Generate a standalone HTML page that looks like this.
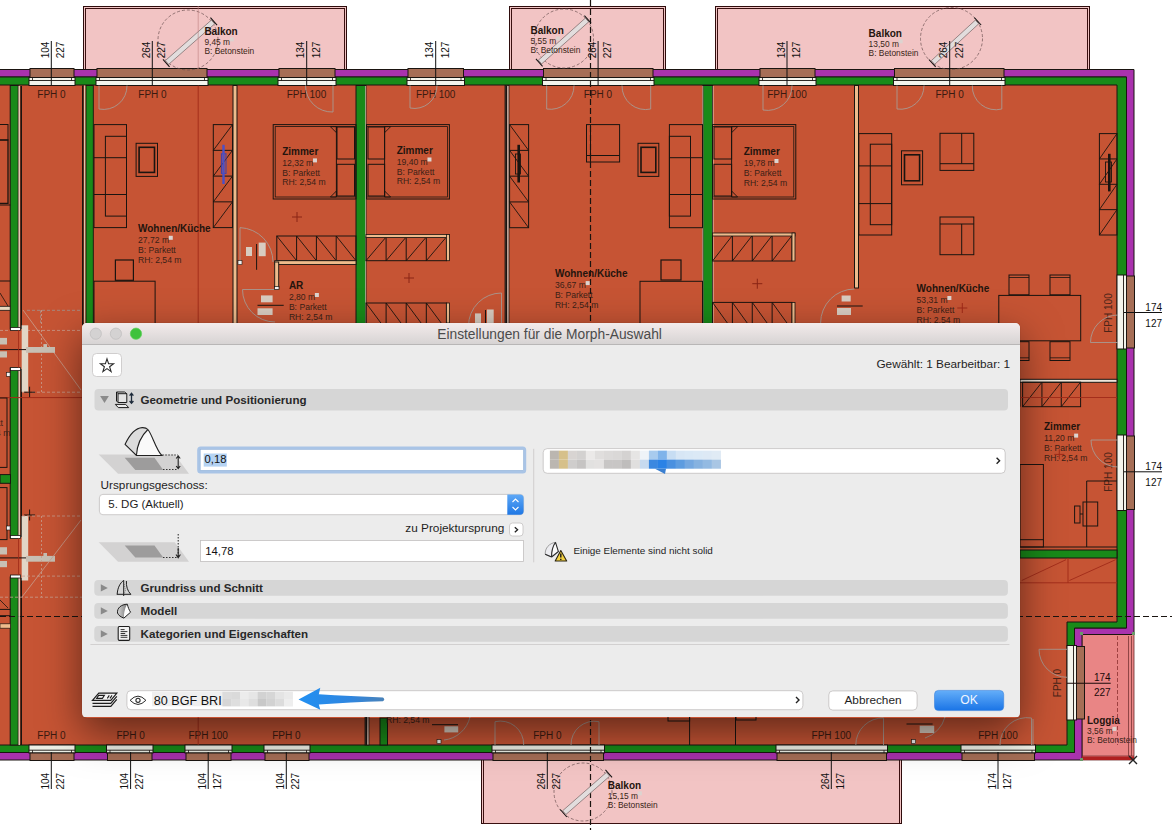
<!DOCTYPE html>
<html><head><meta charset="utf-8"><style>html,body{margin:0;padding:0;width:1172px;height:830px;overflow:hidden;background:#fff;font-family:"Liberation Sans",sans-serif}
#dlg{position:absolute;left:82px;top:323px;width:938px;height:395px;border-radius:5px;box-shadow:0 14px 40px rgba(0,0,0,0.52),0 0 1px rgba(0,0,0,0.35);overflow:hidden}
</style></head>
<body>
<svg width="1172" height="830" viewBox="0 0 1172 830" style="position:absolute;left:0;top:0" font-family="Liberation Sans, sans-serif"><rect x="0" y="0" width="1172" height="830" fill="#ffffff" />
<rect x="83.5" y="6.5" width="263" height="66" fill="#f2c4c4" stroke="#2e0c0c" stroke-width="1" />
<rect x="85.5" y="8.5" width="259" height="64" fill="none" stroke="#3a1010" stroke-width="1" />
<rect x="509.5" y="6.5" width="156" height="66" fill="#f2c4c4" stroke="#2e0c0c" stroke-width="1" />
<rect x="511.5" y="8.5" width="152" height="64" fill="none" stroke="#3a1010" stroke-width="1" />
<rect x="715.5" y="6.5" width="374" height="66" fill="#f2c4c4" stroke="#2e0c0c" stroke-width="1" />
<rect x="717.5" y="8.5" width="370" height="64" fill="none" stroke="#3a1010" stroke-width="1" />
<rect x="481.5" y="756.5" width="420" height="67" fill="#f2c4c4" stroke="#2e0c0c" stroke-width="1" />
<rect x="483.5" y="758.5" width="416" height="65" fill="none" stroke="#3a1010" stroke-width="1" />
<rect x="1082" y="634" width="52" height="126" fill="#e98a8a" />
<rect x="0" y="85" width="1117" height="660" fill="#c65434" />
<rect x="1067" y="623" width="60" height="130" fill="#ffffff" />
<rect x="1082" y="634" width="52" height="126" fill="#e98585" stroke="#6a2a2a" stroke-width="0.8" />
<path d="M-5 69.5 L1134 69.5 L1134 634.5 L1082 634.5 L1082 760 L-5 760 L-5 752.5 L1074.5 752.5 L1074.5 628 L1126.5 628 L1126.5 77 L-5 77 Z" fill="#a932ad" stroke="#1a1410" stroke-width="1" />
<path d="M-5 77 L1126.5 77 L1126.5 628 L1074.5 628 L1074.5 752.5 L-5 752.5 L-5 745 L1067 745 L1067 622 L1117 622 L1117 85 L-5 85 Z" fill="#198a19" stroke="#1a1410" stroke-width="1" />
<rect x="30" y="68.5" width="44" height="9" fill="#a66e56" stroke="#1a1410" stroke-width="1" />
<rect x="29" y="77.5" width="46" height="8" fill="#f4f4ec" stroke="#1a1410" stroke-width="1" />
<line x1="29" y1="80.5" x2="75" y2="80.5" stroke="#1a1410" stroke-width="0.9" />
<line x1="32.5" y1="77.5" x2="32.5" y2="80.5" stroke="#1a1410" stroke-width="0.8" />
<line x1="71.5" y1="77.5" x2="71.5" y2="80.5" stroke="#1a1410" stroke-width="0.8" />
<rect x="97" y="68.5" width="110" height="9" fill="#a66e56" stroke="#1a1410" stroke-width="1" />
<rect x="96" y="77.5" width="112" height="8" fill="#f4f4ec" stroke="#1a1410" stroke-width="1" />
<line x1="96" y1="80.5" x2="208" y2="80.5" stroke="#1a1410" stroke-width="0.9" />
<line x1="99.5" y1="77.5" x2="99.5" y2="80.5" stroke="#1a1410" stroke-width="0.8" />
<line x1="204.5" y1="77.5" x2="204.5" y2="80.5" stroke="#1a1410" stroke-width="0.8" />
<rect x="279" y="68.5" width="56" height="9" fill="#a66e56" stroke="#1a1410" stroke-width="1" />
<rect x="278" y="77.5" width="58" height="8" fill="#f4f4ec" stroke="#1a1410" stroke-width="1" />
<line x1="278" y1="80.5" x2="336" y2="80.5" stroke="#1a1410" stroke-width="0.9" />
<line x1="281.5" y1="77.5" x2="281.5" y2="80.5" stroke="#1a1410" stroke-width="0.8" />
<line x1="332.5" y1="77.5" x2="332.5" y2="80.5" stroke="#1a1410" stroke-width="0.8" />
<rect x="408" y="68.5" width="55.5" height="9" fill="#a66e56" stroke="#1a1410" stroke-width="1" />
<rect x="407" y="77.5" width="57.5" height="8" fill="#f4f4ec" stroke="#1a1410" stroke-width="1" />
<line x1="407" y1="80.5" x2="464.5" y2="80.5" stroke="#1a1410" stroke-width="0.9" />
<line x1="410.5" y1="77.5" x2="410.5" y2="80.5" stroke="#1a1410" stroke-width="0.8" />
<line x1="461.0" y1="77.5" x2="461.0" y2="80.5" stroke="#1a1410" stroke-width="0.8" />
<rect x="543.5" y="68.5" width="109.5" height="9" fill="#a66e56" stroke="#1a1410" stroke-width="1" />
<rect x="542.5" y="77.5" width="111.5" height="8" fill="#f4f4ec" stroke="#1a1410" stroke-width="1" />
<line x1="542.5" y1="80.5" x2="654" y2="80.5" stroke="#1a1410" stroke-width="0.9" />
<line x1="546.0" y1="77.5" x2="546.0" y2="80.5" stroke="#1a1410" stroke-width="0.8" />
<line x1="650.5" y1="77.5" x2="650.5" y2="80.5" stroke="#1a1410" stroke-width="0.8" />
<rect x="760" y="68.5" width="55" height="9" fill="#a66e56" stroke="#1a1410" stroke-width="1" />
<rect x="759" y="77.5" width="57" height="8" fill="#f4f4ec" stroke="#1a1410" stroke-width="1" />
<line x1="759" y1="80.5" x2="816" y2="80.5" stroke="#1a1410" stroke-width="0.9" />
<line x1="762.5" y1="77.5" x2="762.5" y2="80.5" stroke="#1a1410" stroke-width="0.8" />
<line x1="812.5" y1="77.5" x2="812.5" y2="80.5" stroke="#1a1410" stroke-width="0.8" />
<rect x="894.5" y="68.5" width="109.5" height="9" fill="#a66e56" stroke="#1a1410" stroke-width="1" />
<rect x="893.5" y="77.5" width="111.5" height="8" fill="#f4f4ec" stroke="#1a1410" stroke-width="1" />
<line x1="893.5" y1="80.5" x2="1005" y2="80.5" stroke="#1a1410" stroke-width="0.9" />
<line x1="897.0" y1="77.5" x2="897.0" y2="80.5" stroke="#1a1410" stroke-width="0.8" />
<line x1="1001.5" y1="77.5" x2="1001.5" y2="80.5" stroke="#1a1410" stroke-width="0.8" />
<rect x="29" y="745" width="46" height="8" fill="#eef0e6" stroke="#1a1410" stroke-width="1" />
<line x1="29" y1="750.2" x2="75" y2="750.2" stroke="#1a1410" stroke-width="0.9" />
<line x1="32.5" y1="750.2" x2="32.5" y2="753" stroke="#1a1410" stroke-width="0.8" />
<line x1="71.5" y1="750.2" x2="71.5" y2="753" stroke="#1a1410" stroke-width="0.8" />
<rect x="30" y="753" width="44" height="7.5" fill="#a66e56" stroke="#1a1410" stroke-width="1" />
<rect x="106.5" y="745" width="46.5" height="8" fill="#eef0e6" stroke="#1a1410" stroke-width="1" />
<line x1="106.5" y1="750.2" x2="153" y2="750.2" stroke="#1a1410" stroke-width="0.9" />
<line x1="110.0" y1="750.2" x2="110.0" y2="753" stroke="#1a1410" stroke-width="0.8" />
<line x1="149.5" y1="750.2" x2="149.5" y2="753" stroke="#1a1410" stroke-width="0.8" />
<rect x="107.5" y="753" width="44.5" height="7.5" fill="#a66e56" stroke="#1a1410" stroke-width="1" />
<rect x="185" y="745" width="47" height="8" fill="#eef0e6" stroke="#1a1410" stroke-width="1" />
<line x1="185" y1="750.2" x2="232" y2="750.2" stroke="#1a1410" stroke-width="0.9" />
<line x1="188.5" y1="750.2" x2="188.5" y2="753" stroke="#1a1410" stroke-width="0.8" />
<line x1="228.5" y1="750.2" x2="228.5" y2="753" stroke="#1a1410" stroke-width="0.8" />
<rect x="186" y="753" width="45" height="7.5" fill="#a66e56" stroke="#1a1410" stroke-width="1" />
<rect x="264" y="745" width="46" height="8" fill="#eef0e6" stroke="#1a1410" stroke-width="1" />
<line x1="264" y1="750.2" x2="310" y2="750.2" stroke="#1a1410" stroke-width="0.9" />
<line x1="267.5" y1="750.2" x2="267.5" y2="753" stroke="#1a1410" stroke-width="0.8" />
<line x1="306.5" y1="750.2" x2="306.5" y2="753" stroke="#1a1410" stroke-width="0.8" />
<rect x="265" y="753" width="44" height="7.5" fill="#a66e56" stroke="#1a1410" stroke-width="1" />
<rect x="492" y="745" width="112.5" height="8" fill="#eef0e6" stroke="#1a1410" stroke-width="1" />
<line x1="492" y1="750.2" x2="604.5" y2="750.2" stroke="#1a1410" stroke-width="0.9" />
<line x1="495.5" y1="750.2" x2="495.5" y2="753" stroke="#1a1410" stroke-width="0.8" />
<line x1="601.0" y1="750.2" x2="601.0" y2="753" stroke="#1a1410" stroke-width="0.8" />
<rect x="493" y="753" width="110.5" height="7.5" fill="#a66e56" stroke="#1a1410" stroke-width="1" />
<rect x="776" y="745" width="111.5" height="8" fill="#eef0e6" stroke="#1a1410" stroke-width="1" />
<line x1="776" y1="750.2" x2="887.5" y2="750.2" stroke="#1a1410" stroke-width="0.9" />
<line x1="779.5" y1="750.2" x2="779.5" y2="753" stroke="#1a1410" stroke-width="0.8" />
<line x1="884.0" y1="750.2" x2="884.0" y2="753" stroke="#1a1410" stroke-width="0.8" />
<rect x="777" y="753" width="109.5" height="7.5" fill="#a66e56" stroke="#1a1410" stroke-width="1" />
<rect x="961" y="745" width="74.5" height="8" fill="#eef0e6" stroke="#1a1410" stroke-width="1" />
<line x1="961" y1="750.2" x2="1035.5" y2="750.2" stroke="#1a1410" stroke-width="0.9" />
<line x1="964.5" y1="750.2" x2="964.5" y2="753" stroke="#1a1410" stroke-width="0.8" />
<line x1="1032.0" y1="750.2" x2="1032.0" y2="753" stroke="#1a1410" stroke-width="0.8" />
<rect x="962" y="753" width="72.5" height="7.5" fill="#a66e56" stroke="#1a1410" stroke-width="1" />
<rect x="1117" y="275" width="9.5" height="74" fill="#f4f4ec" stroke="#1a1410" stroke-width="1" />
<line x1="1123.5" y1="275" x2="1123.5" y2="349" stroke="#1a1410" stroke-width="0.9" />
<rect x="1126.5" y="276" width="8" height="72" fill="#a66e56" stroke="#1a1410" stroke-width="1" />
<rect x="1117" y="435" width="9.5" height="75.5" fill="#f4f4ec" stroke="#1a1410" stroke-width="1" />
<line x1="1123.5" y1="435" x2="1123.5" y2="510.5" stroke="#1a1410" stroke-width="0.9" />
<rect x="1126.5" y="436" width="8" height="73.5" fill="#a66e56" stroke="#1a1410" stroke-width="1" />
<rect x="1067" y="645.5" width="9.5" height="74.5" fill="#f4f4ec" stroke="#1a1410" stroke-width="1" />
<line x1="1073.5" y1="645.5" x2="1073.5" y2="720" stroke="#1a1410" stroke-width="0.9" />
<rect x="1076.5" y="646.5" width="8" height="72.5" fill="#a66e56" stroke="#1a1410" stroke-width="1" />
<rect x="10.2" y="85.5" width="8" height="243.5" fill="#198a19" stroke="#1a1410" stroke-width="1" />
<rect x="10.2" y="368" width="8" height="170" fill="#198a19" stroke="#1a1410" stroke-width="1" />
<rect x="10.2" y="577" width="8" height="168" fill="#198a19" stroke="#1a1410" stroke-width="1" />
<rect x="86" y="85.5" width="7.3" height="240" fill="#198a19" stroke="#1a1410" stroke-width="0.9" />
<line x1="82.8" y1="85.5" x2="82.8" y2="325" stroke="#1a1410" stroke-width="1.6" />
<line x1="84.7" y1="85.5" x2="84.7" y2="325" stroke="#e6e0c8" stroke-width="1" />
<rect x="356" y="85.5" width="10" height="240" fill="#198a19" stroke="#1a1410" stroke-width="1" />
<rect x="703" y="85.5" width="9.5" height="240" fill="#198a19" stroke="#1a1410" stroke-width="1" />
<rect x="380" y="718" width="7.5" height="27" fill="#198a19" stroke="#1a1410" stroke-width="1" />
<rect x="505" y="85.5" width="4" height="240" fill="#e8c4b4" stroke="#1a1410" stroke-width="0.8" />
<line x1="506.2" y1="85.5" x2="506.2" y2="325" stroke="#1a1410" stroke-width="2" />
<rect x="233" y="85.5" width="4" height="239.5" fill="#eebb8c" stroke="#1a1410" stroke-width="1" />
<rect x="854.5" y="85.5" width="4" height="202.5" fill="#eebb8c" stroke="#1a1410" stroke-width="1" />
<line x1="590.5" y1="0" x2="590.5" y2="830" stroke="#1a1410" stroke-width="1.2" stroke-dasharray="6 3"/>
<line x1="0" y1="616.5" x2="1172" y2="616.5" stroke="#1a1410" stroke-width="1.2" stroke-dasharray="6 3"/>
<circle cx="188" cy="40" r="30" fill="none" stroke="#6a5050" stroke-width="0.7" stroke-dasharray="3 2"/>
<g transform="translate(167,62.5) rotate(-41.36181342213534)"><rect x="0" y="-2.5" width="61.28825336065631" height="5" fill="#e2dddd" stroke="#6a5a5a" stroke-width="0.6"/><line x1="-1" y1="-5" x2="-1" y2="5" stroke="#111" stroke-width="1"/><line x1="62.28825336065631" y1="-5" x2="62.28825336065631" y2="5" stroke="#111" stroke-width="1"/></g>
<circle cx="564" cy="38.5" r="29.5" fill="none" stroke="#6a5050" stroke-width="0.7" stroke-dasharray="3 2"/>
<g transform="translate(540,62) rotate(-41.78451600825179)"><rect x="0" y="-2.5" width="63.0317380372777" height="5" fill="#e2dddd" stroke="#6a5a5a" stroke-width="0.6"/><line x1="-1" y1="-5" x2="-1" y2="5" stroke="#111" stroke-width="1"/><line x1="64.0317380372777" y1="-5" x2="64.0317380372777" y2="5" stroke="#111" stroke-width="1"/></g>
<circle cx="951.5" cy="38.5" r="31" fill="none" stroke="#6a5050" stroke-width="0.7" stroke-dasharray="3 2"/>
<g transform="translate(933,62.5) rotate(-42.62815781021078)"><rect x="0" y="-2.5" width="59.80175582706581" height="5" fill="#e2dddd" stroke="#6a5a5a" stroke-width="0.6"/><line x1="-1" y1="-5" x2="-1" y2="5" stroke="#111" stroke-width="1"/><line x1="60.80175582706581" y1="-5" x2="60.80175582706581" y2="5" stroke="#111" stroke-width="1"/></g>
<circle cx="583" cy="792" r="29" fill="none" stroke="#6a5050" stroke-width="0.7" stroke-dasharray="3 2"/>
<g transform="translate(564.3,812.6) rotate(-41.23230347799668)"><rect x="0" y="-2.5" width="58.10834707681857" height="5" fill="#e2dddd" stroke="#6a5a5a" stroke-width="0.6"/><line x1="-1" y1="-5" x2="-1" y2="5" stroke="#111" stroke-width="1"/><line x1="59.10834707681857" y1="-5" x2="59.10834707681857" y2="5" stroke="#111" stroke-width="1"/></g>
<text x="204.4" y="34.7" font-size="10" font-weight="bold" fill="#24140e" text-anchor="start" >Balkon</text>
<text x="204.4" y="44.7" font-size="8.4" fill="#3a1f16" text-anchor="start" >9,45 m</text>
<rect x="229.77921511627906" y="37.400000000000006" width="4" height="4" fill="#dcd4d0" />
<text x="204.4" y="53.7" font-size="8.4" fill="#3a1f16" text-anchor="start" >B: Betonstein</text>
<text x="530.5" y="33.8" font-size="10" font-weight="bold" fill="#24140e" text-anchor="start" >Balkon</text>
<text x="530.5" y="43.8" font-size="8.4" fill="#3a1f16" text-anchor="start" >5,55 m</text>
<rect x="555.879215116279" y="36.5" width="4" height="4" fill="#dcd4d0" />
<text x="530.5" y="52.8" font-size="8.4" fill="#3a1f16" text-anchor="start" >B: Betonstein</text>
<text x="868.6" y="36.6" font-size="10" font-weight="bold" fill="#24140e" text-anchor="start" >Balkon</text>
<text x="868.6" y="46.6" font-size="8.4" fill="#3a1f16" text-anchor="start" >13,50 m</text>
<rect x="898.6507994186047" y="39.300000000000004" width="4" height="4" fill="#dcd4d0" />
<text x="868.6" y="55.6" font-size="8.4" fill="#3a1f16" text-anchor="start" >B: Betonstein</text>
<text x="607.8" y="788.6" font-size="10" font-weight="bold" fill="#24140e" text-anchor="start" >Balkon</text>
<text x="607.8" y="798.6" font-size="8.4" fill="#3a1f16" text-anchor="start" >15,15 m</text>
<rect x="637.8507994186047" y="791.3000000000001" width="4" height="4" fill="#dcd4d0" />
<text x="607.8" y="807.6" font-size="8.4" fill="#3a1f16" text-anchor="start" >B: Betonstein</text>
<text x="1087" y="724.2" font-size="10" font-weight="bold" fill="#24140e" text-anchor="start" >Loggia</text>
<text x="1087" y="734.2" font-size="8.4" fill="#3a1f16" text-anchor="start" >3,56 m</text>
<rect x="1112.379215116279" y="726.9000000000001" width="4" height="4" fill="#dcd4d0" />
<text x="1087" y="743.2" font-size="8.4" fill="#3a1f16" text-anchor="start" >B: Betonstein</text>
<text x="51.5" y="98" font-size="10" fill="#3a1a10" text-anchor="middle" >FPH 0</text>
<text x="152.5" y="98" font-size="10" fill="#3a1a10" text-anchor="middle" >FPH 0</text>
<text x="306.5" y="98" font-size="10" fill="#3a1a10" text-anchor="middle" >FPH 100</text>
<text x="435.7" y="98" font-size="10" fill="#3a1a10" text-anchor="middle" >FPH 100</text>
<text x="598" y="98" font-size="10" fill="#3a1a10" text-anchor="middle" >FPH 0</text>
<text x="787" y="98" font-size="10" fill="#3a1a10" text-anchor="middle" >FPH 100</text>
<text x="949.7" y="98" font-size="10" fill="#3a1a10" text-anchor="middle" >FPH 0</text>
<text x="51.5" y="738.8" font-size="10" fill="#3a1a10" text-anchor="middle" >FPH 0</text>
<text x="130.6" y="738.8" font-size="10" fill="#3a1a10" text-anchor="middle" >FPH 0</text>
<text x="208.2" y="738.8" font-size="10" fill="#3a1a10" text-anchor="middle" >FPH 100</text>
<text x="286.3" y="738.8" font-size="10" fill="#3a1a10" text-anchor="middle" >FPH 0</text>
<text x="547.3" y="738.8" font-size="10" fill="#3a1a10" text-anchor="middle" >FPH 0</text>
<text x="831.3" y="738.8" font-size="10" fill="#3a1a10" text-anchor="middle" >FPH 100</text>
<text x="998" y="738.8" font-size="10" fill="#3a1a10" text-anchor="middle" >FPH 100</text>
<line x1="51.3" y1="41" x2="51.3" y2="85" stroke="#111111" stroke-width="1" />
<text x="0" y="0" font-size="10" fill="#111" text-anchor="start" transform="translate(49.0,58.3) rotate(-90)">104</text>
<text x="0" y="0" font-size="10" fill="#111" text-anchor="start" transform="translate(64.3,58.3) rotate(-90)">227</text>
<line x1="152.3" y1="41" x2="152.3" y2="85" stroke="#111111" stroke-width="1" />
<text x="0" y="0" font-size="10" fill="#111" text-anchor="start" transform="translate(150.0,58.3) rotate(-90)">264</text>
<text x="0" y="0" font-size="10" fill="#111" text-anchor="start" transform="translate(165.3,58.3) rotate(-90)">227</text>
<line x1="306.7" y1="41" x2="306.7" y2="85" stroke="#111111" stroke-width="1" />
<text x="0" y="0" font-size="10" fill="#111" text-anchor="start" transform="translate(304.4,58.3) rotate(-90)">134</text>
<text x="0" y="0" font-size="10" fill="#111" text-anchor="start" transform="translate(319.7,58.3) rotate(-90)">127</text>
<line x1="435.7" y1="41" x2="435.7" y2="85" stroke="#111111" stroke-width="1" />
<text x="0" y="0" font-size="10" fill="#111" text-anchor="start" transform="translate(433.4,58.3) rotate(-90)">134</text>
<text x="0" y="0" font-size="10" fill="#111" text-anchor="start" transform="translate(448.7,58.3) rotate(-90)">127</text>
<line x1="598.1" y1="41" x2="598.1" y2="85" stroke="#111111" stroke-width="1" />
<text x="0" y="0" font-size="10" fill="#111" text-anchor="start" transform="translate(595.8000000000001,58.3) rotate(-90)">264</text>
<text x="0" y="0" font-size="10" fill="#111" text-anchor="start" transform="translate(611.1,58.3) rotate(-90)">227</text>
<line x1="787" y1="41" x2="787" y2="85" stroke="#111111" stroke-width="1" />
<text x="0" y="0" font-size="10" fill="#111" text-anchor="start" transform="translate(784.7,58.3) rotate(-90)">134</text>
<text x="0" y="0" font-size="10" fill="#111" text-anchor="start" transform="translate(800,58.3) rotate(-90)">127</text>
<line x1="949.7" y1="41" x2="949.7" y2="85" stroke="#111111" stroke-width="1" />
<text x="0" y="0" font-size="10" fill="#111" text-anchor="start" transform="translate(947.4000000000001,58.3) rotate(-90)">264</text>
<text x="0" y="0" font-size="10" fill="#111" text-anchor="start" transform="translate(962.7,58.3) rotate(-90)">227</text>
<line x1="51.3" y1="752" x2="51.3" y2="789" stroke="#111111" stroke-width="1" />
<text x="0" y="0" font-size="10" fill="#111" text-anchor="start" transform="translate(49.099999999999994,789.6) rotate(-90)">104</text>
<text x="0" y="0" font-size="10" fill="#111" text-anchor="start" transform="translate(64.1,789.6) rotate(-90)">227</text>
<line x1="130.6" y1="752" x2="130.6" y2="789" stroke="#111111" stroke-width="1" />
<text x="0" y="0" font-size="10" fill="#111" text-anchor="start" transform="translate(128.4,789.6) rotate(-90)">104</text>
<text x="0" y="0" font-size="10" fill="#111" text-anchor="start" transform="translate(143.4,789.6) rotate(-90)">227</text>
<line x1="208.2" y1="752" x2="208.2" y2="789" stroke="#111111" stroke-width="1" />
<text x="0" y="0" font-size="10" fill="#111" text-anchor="start" transform="translate(206.0,789.6) rotate(-90)">104</text>
<text x="0" y="0" font-size="10" fill="#111" text-anchor="start" transform="translate(221.0,789.6) rotate(-90)">127</text>
<line x1="286.3" y1="752" x2="286.3" y2="789" stroke="#111111" stroke-width="1" />
<text x="0" y="0" font-size="10" fill="#111" text-anchor="start" transform="translate(284.1,789.6) rotate(-90)">104</text>
<text x="0" y="0" font-size="10" fill="#111" text-anchor="start" transform="translate(299.1,789.6) rotate(-90)">227</text>
<line x1="547.3" y1="752" x2="547.3" y2="789" stroke="#111111" stroke-width="1" />
<text x="0" y="0" font-size="10" fill="#111" text-anchor="start" transform="translate(545.0999999999999,789.6) rotate(-90)">264</text>
<text x="0" y="0" font-size="10" fill="#111" text-anchor="start" transform="translate(560.0999999999999,789.6) rotate(-90)">227</text>
<line x1="831.3" y1="752" x2="831.3" y2="789" stroke="#111111" stroke-width="1" />
<text x="0" y="0" font-size="10" fill="#111" text-anchor="start" transform="translate(829.0999999999999,789.6) rotate(-90)">264</text>
<text x="0" y="0" font-size="10" fill="#111" text-anchor="start" transform="translate(844.0999999999999,789.6) rotate(-90)">127</text>
<line x1="998" y1="752" x2="998" y2="789" stroke="#111111" stroke-width="1" />
<text x="0" y="0" font-size="10" fill="#111" text-anchor="start" transform="translate(995.8,789.6) rotate(-90)">174</text>
<text x="0" y="0" font-size="10" fill="#111" text-anchor="start" transform="translate(1010.8,789.6) rotate(-90)">127</text>
<line x1="1124" y1="312.5" x2="1162" y2="312.5" stroke="#111111" stroke-width="1" />
<text x="1153.7" y="311.0" font-size="10" fill="#111" text-anchor="middle" >174</text>
<text x="1153.7" y="326.5" font-size="10" fill="#111" text-anchor="middle" >127</text>
<line x1="1124" y1="471.8" x2="1162" y2="471.8" stroke="#111111" stroke-width="1" />
<text x="1153.7" y="470.3" font-size="10" fill="#111" text-anchor="middle" >174</text>
<text x="1153.7" y="485.8" font-size="10" fill="#111" text-anchor="middle" >127</text>
<line x1="1067" y1="683.3" x2="1110.7" y2="683.3" stroke="#1a0a0a" stroke-width="1.1" />
<text x="1102.3" y="680.8" font-size="10" fill="#1a0a0a" text-anchor="middle" >174</text>
<text x="1102.3" y="695.9" font-size="10" fill="#1a0a0a" text-anchor="middle" >227</text>
<text x="0" y="0" font-size="10" fill="#4a2418" text-anchor="middle" transform="translate(1111.5,313) rotate(-90)">FPH 100</text>
<text x="0" y="0" font-size="10" fill="#4a2418" text-anchor="middle" transform="translate(1111.5,472) rotate(-90)">FPH 100</text>
<text x="0" y="0" font-size="10" fill="#4a2418" text-anchor="middle" transform="translate(1061,683) rotate(-90)">FPH 0</text>
<rect x="-2" y="124.5" width="10" height="15.5" fill="none" stroke="#1a1410" stroke-width="1" />
<rect x="-2" y="140" width="10" height="63.4" fill="none" stroke="#1a1410" stroke-width="1.3" />
<line x1="0" y1="205" x2="10.5" y2="205" stroke="#1a1410" stroke-width="1" />
<line x1="0" y1="281" x2="10.2" y2="281" stroke="#1a1410" stroke-width="1" />
<line x1="0" y1="293" x2="8" y2="306" stroke="#1a1410" stroke-width="0.8" />
<rect x="-1" y="306.3" width="11.2" height="4" fill="#e8d8c0" stroke="#1a1410" stroke-width="0.8" />
<line x1="365.6" y1="86" x2="365.6" y2="323" stroke="#e6d6c6" stroke-width="0.7" />
<line x1="702.8" y1="86" x2="702.8" y2="323" stroke="#e6d6c6" stroke-width="0.7" />
<line x1="713.2" y1="86" x2="713.2" y2="323" stroke="#e6d6c6" stroke-width="0.7" />
<line x1="19.2" y1="86" x2="19.2" y2="329" stroke="#e6e0c8" stroke-width="1.3" />
<line x1="21.2" y1="86" x2="21.2" y2="329" stroke="#1a1410" stroke-width="1.6" />
<line x1="19.2" y1="369" x2="19.2" y2="537" stroke="#e6e0c8" stroke-width="1.3" />
<line x1="21.2" y1="369" x2="21.2" y2="537" stroke="#1a1410" stroke-width="1.6" />
<line x1="19.2" y1="578" x2="19.2" y2="745" stroke="#e6e0c8" stroke-width="1.3" />
<line x1="21.2" y1="578" x2="21.2" y2="745" stroke="#1a1410" stroke-width="1.6" />
<line x1="27" y1="310.3" x2="82" y2="310.3" stroke="#a09590" stroke-width="0.8" stroke-dasharray="3 2"/>
<line x1="40.6" y1="310.3" x2="40.6" y2="323" stroke="#a09590" stroke-width="0.8" stroke-dasharray="3 2"/>
<line x1="198.2" y1="85.5" x2="198.2" y2="323" stroke="#a02a18" stroke-width="0.9" />
<line x1="198.2" y1="6" x2="198.2" y2="69" stroke="#c08080" stroke-width="0.6" />
<rect x="94" y="124.6" width="32.5" height="103.0" fill="none" stroke="#1a1410" stroke-width="1" />
<rect x="105.4" y="136.3" width="21.099999999999994" height="79.79999999999998" fill="none" stroke="#1a1410" stroke-width="1" />
<line x1="94" y1="157.7" x2="126.5" y2="157.7" stroke="#1a1410" stroke-width="1" />
<line x1="94" y1="194.5" x2="126.5" y2="194.5" stroke="#1a1410" stroke-width="1" />
<rect x="136.1" y="143.3" width="21.400000000000006" height="33.099999999999994" fill="none" stroke="#1a1410" stroke-width="1" />
<rect x="139.1" y="147.3" width="15.400000000000006" height="25.099999999999994" fill="none" stroke="#1a1410" stroke-width="1.6" />
<rect x="213.3" y="124.6" width="19.19999999999999" height="103.0" fill="none" stroke="#1a1410" stroke-width="1" />
<line x1="213.3" y1="150.35" x2="232.5" y2="124.6" stroke="#1a1410" stroke-width="0.9" />
<line x1="213.3" y1="150.35" x2="232.5" y2="150.35" stroke="#1a1410" stroke-width="1" />
<line x1="213.3" y1="176.1" x2="232.5" y2="150.35" stroke="#1a1410" stroke-width="0.9" />
<line x1="213.3" y1="176.1" x2="232.5" y2="176.1" stroke="#1a1410" stroke-width="1" />
<line x1="213.3" y1="201.85" x2="232.5" y2="176.1" stroke="#1a1410" stroke-width="0.9" />
<line x1="213.3" y1="201.85" x2="232.5" y2="201.85" stroke="#1a1410" stroke-width="1" />
<line x1="213.3" y1="227.6" x2="232.5" y2="201.85" stroke="#1a1410" stroke-width="0.9" />
<rect x="221.4" y="153.8" width="4.6" height="19.6" fill="none" stroke="#3a40b0" stroke-width="1" />
<line x1="223.5" y1="144.8" x2="223.5" y2="184" stroke="#4a50c8" stroke-width="2.4" />
<rect x="115.4" y="260" width="18" height="20.3" fill="none" stroke="#1a1410" stroke-width="1.2" />
<rect x="94" y="281.2" width="61.1" height="50" fill="none" stroke="#1a1410" stroke-width="1" />
<text x="138" y="232.1" font-size="10" font-weight="bold" fill="#24140e" text-anchor="start" >Wohnen/Küche</text>
<text x="138" y="243.1" font-size="8.6" fill="#3a1f16" text-anchor="start" >27,72 m</text>
<rect x="168.7734375" y="235.79999999999998" width="4" height="4" fill="#dcd4d0" />
<text x="138" y="252.9" font-size="8.6" fill="#3a1f16" text-anchor="start" >B: Parkett</text>
<text x="138" y="262.7" font-size="8.6" fill="#3a1f16" text-anchor="start" >RH: 2,54 m</text>
<path d="M99 85.5 L99 109 A23.5 23.5 0 0 0 127 85.5" fill="none" stroke="#a89a92" stroke-width="0.9" />
<rect x="273.2" y="124.6" width="82.8" height="74.4" fill="none" stroke="#1a1410" stroke-width="1" />
<rect x="275.2" y="126.6" width="80" height="70.4" fill="none" stroke="#1a1410" stroke-width="0.8" />
<line x1="336.4" y1="126.6" x2="336.4" y2="197" stroke="#1a1410" stroke-width="1" />
<rect x="337" y="127" width="17.5" height="32" fill="none" stroke="#1a1410" stroke-width="1" />
<rect x="337" y="164.3" width="17.5" height="31.7" fill="none" stroke="#1a1410" stroke-width="1" />
<path d="M330.4 126.7 L336.4 126.7 L336.4 132.7 Z" fill="none" stroke="#1a1410" stroke-width="0.9" />
<path d="M330.4 197 L336.4 197 L336.4 191 Z" fill="none" stroke="#1a1410" stroke-width="0.9" />
<text x="282.2" y="154.7" font-size="10" font-weight="bold" fill="#24140e" text-anchor="start" >Zimmer</text>
<text x="282.2" y="165.7" font-size="8.6" fill="#3a1f16" text-anchor="start" >12,32 m</text>
<rect x="312.9734375" y="158.39999999999998" width="4" height="4" fill="#dcd4d0" />
<text x="282.2" y="175.5" font-size="8.6" fill="#3a1f16" text-anchor="start" >B: Parkett</text>
<text x="282.2" y="185.29999999999998" font-size="8.6" fill="#3a1f16" text-anchor="start" >RH: 2,54 m</text>
<line x1="292" y1="217" x2="302" y2="217" stroke="#8a2414" stroke-width="1" />
<line x1="297" y1="212" x2="297" y2="222" stroke="#8a2414" stroke-width="1" />
<rect x="276.8" y="236" width="79.19999999999999" height="24.69999999999999" fill="none" stroke="#1a1410" stroke-width="1" />
<line x1="276.8" y1="236" x2="296.6" y2="260.7" stroke="#1a1410" stroke-width="0.9" />
<line x1="296.6" y1="236" x2="296.6" y2="260.7" stroke="#1a1410" stroke-width="1" />
<line x1="296.6" y1="236" x2="316.40000000000003" y2="260.7" stroke="#1a1410" stroke-width="0.9" />
<line x1="316.4" y1="236" x2="316.4" y2="260.7" stroke="#1a1410" stroke-width="1" />
<line x1="316.4" y1="236" x2="336.2" y2="260.7" stroke="#1a1410" stroke-width="0.9" />
<line x1="336.2" y1="236" x2="336.2" y2="260.7" stroke="#1a1410" stroke-width="1" />
<line x1="336.2" y1="236" x2="356.0" y2="260.7" stroke="#1a1410" stroke-width="0.9" />
<rect x="274.7" y="260.7" width="81.3" height="3.8" fill="#eebb8c" stroke="#1a1410" stroke-width="0.9" />
<rect x="274.7" y="262" width="4" height="25.8" fill="#eebb8c" stroke="#1a1410" stroke-width="0.9" />
<path d="M240 262 L240 227.6 A34.400000000000006 34.400000000000006 0 0 1 273 262" fill="none" stroke="#a89a92" stroke-width="0.9" />
<rect x="238" y="260.5" width="4" height="4" fill="#f0f0f0" stroke="#1a1410" stroke-width="0.6" />
<rect x="246" y="247" width="6" height="9" fill="#d8ccc0" />
<rect x="258.7" y="242.6" width="7" height="13.6" fill="#d8ccc0" />
<line x1="256.6" y1="244" x2="256.6" y2="269.8" stroke="#1a1410" stroke-width="1" />
<text x="288.9" y="289.3" font-size="10" font-weight="bold" fill="#24140e" text-anchor="start" >AR</text>
<text x="288.9" y="300.3" font-size="8.6" fill="#3a1f16" text-anchor="start" >2,80 m</text>
<rect x="314.89062499999994" y="293.0" width="4" height="4" fill="#dcd4d0" />
<text x="288.9" y="310.1" font-size="8.6" fill="#3a1f16" text-anchor="start" >B: Parkett</text>
<text x="288.9" y="319.90000000000003" font-size="8.6" fill="#3a1f16" text-anchor="start" >RH: 2,54 m</text>
<rect x="261" y="295.4" width="11.6" height="6.9" fill="#d8ccc0" />
<rect x="257.5" y="308.3" width="15.1" height="6.7" fill="#d8ccc0" />
<line x1="257.5" y1="305.3" x2="283.7" y2="305.3" stroke="#1a1410" stroke-width="1" />
<path d="M275 289.5 L242.5 289.5 A 32.5 32.5 0 0 0 275 322" fill="none" stroke="#a89a92" stroke-width="0.9" />
<rect x="274.6" y="286.5" width="4.4" height="3" fill="#f4f4f4" stroke="#1a1410" stroke-width="0.7" />
<path d="M333 85.5 L333 112 A26.5 26.5 0 0 1 305.5 85.5" fill="none" stroke="#a89a92" stroke-width="0.9" />
<rect x="366.5" y="124.6" width="82.9" height="74.4" fill="none" stroke="#1a1410" stroke-width="1" />
<rect x="366.5" y="126.6" width="80.9" height="70.4" fill="none" stroke="#1a1410" stroke-width="0.8" />
<line x1="384.6" y1="126.6" x2="384.6" y2="197" stroke="#1a1410" stroke-width="1" />
<rect x="368" y="127" width="16.6" height="32" fill="none" stroke="#1a1410" stroke-width="1" />
<rect x="368" y="164.3" width="16.6" height="31.7" fill="none" stroke="#1a1410" stroke-width="1" />
<path d="M390.6 126.7 L384.6 126.7 L384.6 132.7 Z" fill="none" stroke="#1a1410" stroke-width="0.9" />
<path d="M390.6 197 L384.6 197 L384.6 191 Z" fill="none" stroke="#1a1410" stroke-width="0.9" />
<text x="396.7" y="153.8" font-size="10" font-weight="bold" fill="#24140e" text-anchor="start" >Zimmer</text>
<text x="396.7" y="164.8" font-size="8.6" fill="#3a1f16" text-anchor="start" >19,40 m</text>
<rect x="427.4734375" y="157.5" width="4" height="4" fill="#dcd4d0" />
<text x="396.7" y="174.60000000000002" font-size="8.6" fill="#3a1f16" text-anchor="start" >B: Parkett</text>
<text x="396.7" y="184.4" font-size="8.6" fill="#3a1f16" text-anchor="start" >RH: 2,54 m</text>
<rect x="366" y="237" width="80.39999999999998" height="23.69999999999999" fill="none" stroke="#1a1410" stroke-width="1" />
<line x1="366.0" y1="260.7" x2="386.1" y2="237" stroke="#1a1410" stroke-width="0.9" />
<line x1="386.1" y1="237" x2="386.1" y2="260.7" stroke="#1a1410" stroke-width="1" />
<line x1="386.1" y1="260.7" x2="406.20000000000005" y2="237" stroke="#1a1410" stroke-width="0.9" />
<line x1="406.2" y1="237" x2="406.2" y2="260.7" stroke="#1a1410" stroke-width="1" />
<line x1="406.2" y1="260.7" x2="426.29999999999995" y2="237" stroke="#1a1410" stroke-width="0.9" />
<line x1="426.29999999999995" y1="237" x2="426.29999999999995" y2="260.7" stroke="#1a1410" stroke-width="1" />
<line x1="426.29999999999995" y1="260.7" x2="446.4" y2="237" stroke="#1a1410" stroke-width="0.9" />
<rect x="366" y="234.5" width="83.4" height="3" fill="#eebb8c" stroke="#1a1410" stroke-width="0.8" />
<rect x="446.4" y="234.5" width="3" height="26.2" fill="#eebb8c" stroke="#1a1410" stroke-width="0.8" />
<line x1="404" y1="278" x2="414" y2="278" stroke="#8a2414" stroke-width="1" />
<line x1="409" y1="273" x2="409" y2="283" stroke="#8a2414" stroke-width="1" />
<rect x="366" y="303" width="80.39999999999998" height="27" fill="none" stroke="#1a1410" stroke-width="1" />
<line x1="366.0" y1="303" x2="386.1" y2="330" stroke="#1a1410" stroke-width="0.9" />
<line x1="386.1" y1="303" x2="386.1" y2="330" stroke="#1a1410" stroke-width="1" />
<line x1="386.1" y1="303" x2="406.20000000000005" y2="330" stroke="#1a1410" stroke-width="0.9" />
<line x1="406.2" y1="303" x2="406.2" y2="330" stroke="#1a1410" stroke-width="1" />
<line x1="406.2" y1="303" x2="426.29999999999995" y2="330" stroke="#1a1410" stroke-width="0.9" />
<line x1="426.29999999999995" y1="303" x2="426.29999999999995" y2="330" stroke="#1a1410" stroke-width="1" />
<line x1="426.29999999999995" y1="303" x2="446.4" y2="330" stroke="#1a1410" stroke-width="0.9" />
<rect x="446.4" y="303" width="3" height="20" fill="#eebb8c" stroke="#1a1410" stroke-width="0.8" />
<path d="M410 85.5 L410 108 A22.5 22.5 0 0 0 437 85.5" fill="none" stroke="#a89a92" stroke-width="0.9" />
<path d="M501.5 326 L501.5 293 A 33 33 0 0 0 468.5 326" fill="none" stroke="#a89a92" stroke-width="0.9" />
<line x1="485.5" y1="310" x2="485.5" y2="325" stroke="#1a1410" stroke-width="1" />
<rect x="475" y="313.4" width="6" height="10" fill="#d8ccc0" />
<rect x="487" y="309.5" width="6.7" height="13.5" fill="#d8ccc0" />
<rect x="509.6" y="124.6" width="19.0" height="103.1" fill="none" stroke="#1a1410" stroke-width="1" />
<line x1="509.6" y1="124.6" x2="528.6" y2="150.375" stroke="#1a1410" stroke-width="0.9" />
<line x1="509.6" y1="150.375" x2="528.6" y2="150.375" stroke="#1a1410" stroke-width="1" />
<line x1="509.6" y1="150.375" x2="528.6" y2="176.15" stroke="#1a1410" stroke-width="0.9" />
<line x1="509.6" y1="176.14999999999998" x2="528.6" y2="176.14999999999998" stroke="#1a1410" stroke-width="1" />
<line x1="509.6" y1="176.14999999999998" x2="528.6" y2="201.92499999999998" stroke="#1a1410" stroke-width="0.9" />
<line x1="509.6" y1="201.92499999999998" x2="528.6" y2="201.92499999999998" stroke="#1a1410" stroke-width="1" />
<line x1="509.6" y1="201.92499999999998" x2="528.6" y2="227.7" stroke="#1a1410" stroke-width="0.9" />
<line x1="518.7" y1="144.8" x2="518.7" y2="182.5" stroke="#1a1410" stroke-width="2.6" />
<rect x="515.5" y="154" width="5" height="20" fill="none" stroke="#1a1410" stroke-width="0.9" />
<rect x="586.5" y="124.6" width="33.1" height="37.4" fill="none" stroke="#1a1410" stroke-width="1" />
<line x1="590.5" y1="124.6" x2="590.5" y2="162" stroke="#1a1410" stroke-width="1" />
<line x1="586.5" y1="155.5" x2="619.6" y2="155.5" stroke="#1a1410" stroke-width="1" />
<rect x="638" y="143.3" width="20.799999999999955" height="33.099999999999994" fill="none" stroke="#1a1410" stroke-width="1" />
<rect x="641" y="147.3" width="14.799999999999955" height="25.099999999999994" fill="none" stroke="#1a1410" stroke-width="1.6" />
<rect x="669.4" y="124.6" width="33.10000000000002" height="103.1" fill="none" stroke="#1a1410" stroke-width="1" />
<rect x="669.4" y="136.3" width="21.100000000000023" height="79.79999999999998" fill="none" stroke="#1a1410" stroke-width="1" />
<line x1="669.4" y1="157.7" x2="702.5" y2="157.7" stroke="#1a1410" stroke-width="1" />
<line x1="669.4" y1="194.5" x2="702.5" y2="194.5" stroke="#1a1410" stroke-width="1" />
<rect x="661" y="260" width="20" height="20" fill="none" stroke="#1a1410" stroke-width="1.2" />
<rect x="640" y="281.3" width="62.5" height="50" fill="none" stroke="#1a1410" stroke-width="1" />
<text x="554.9" y="277.4" font-size="10" font-weight="bold" fill="#24140e" text-anchor="start" >Wohnen/Küche</text>
<text x="554.9" y="288.4" font-size="8.6" fill="#3a1f16" text-anchor="start" >36,67 m</text>
<rect x="585.6734375" y="281.09999999999997" width="4" height="4" fill="#dcd4d0" />
<text x="554.9" y="298.2" font-size="8.6" fill="#3a1f16" text-anchor="start" >B: Parkett</text>
<text x="554.9" y="308.0" font-size="8.6" fill="#3a1f16" text-anchor="start" >RH: 2,54 m</text>
<path d="M546.7 85.5 L546.7 109 A23.5 23.5 0 0 0 574 85.5" fill="none" stroke="#a89a92" stroke-width="0.9" />
<path d="M650.7 85.5 L650.7 109 A23.5 23.5 0 0 1 622 85.5" fill="none" stroke="#a89a92" stroke-width="0.9" />
<rect x="712.5" y="124.6" width="83.3" height="74.4" fill="none" stroke="#1a1410" stroke-width="1" />
<rect x="712.5" y="126.6" width="81.3" height="70.4" fill="none" stroke="#1a1410" stroke-width="0.8" />
<line x1="731.6" y1="126.6" x2="731.6" y2="197" stroke="#1a1410" stroke-width="1" />
<rect x="714" y="127" width="17.6" height="32" fill="none" stroke="#1a1410" stroke-width="1" />
<rect x="714" y="164.3" width="17.6" height="31.7" fill="none" stroke="#1a1410" stroke-width="1" />
<path d="M737.6 126.7 L731.6 126.7 L731.6 132.7 Z" fill="none" stroke="#1a1410" stroke-width="0.9" />
<path d="M737.6 197 L731.6 197 L731.6 191 Z" fill="none" stroke="#1a1410" stroke-width="0.9" />
<text x="743.7" y="155.3" font-size="10" font-weight="bold" fill="#24140e" text-anchor="start" >Zimmer</text>
<text x="743.7" y="166.3" font-size="8.6" fill="#3a1f16" text-anchor="start" >19,78 m</text>
<rect x="774.4734375" y="159.0" width="4" height="4" fill="#dcd4d0" />
<text x="743.7" y="176.10000000000002" font-size="8.6" fill="#3a1f16" text-anchor="start" >B: Parkett</text>
<text x="743.7" y="185.9" font-size="8.6" fill="#3a1f16" text-anchor="start" >RH: 2,54 m</text>
<rect x="712.5" y="235.5" width="79.5" height="25.5" fill="none" stroke="#1a1410" stroke-width="1" />
<line x1="712.5" y1="261" x2="732.375" y2="235.5" stroke="#1a1410" stroke-width="0.9" />
<line x1="732.375" y1="235.5" x2="732.375" y2="261" stroke="#1a1410" stroke-width="1" />
<line x1="732.375" y1="261" x2="752.25" y2="235.5" stroke="#1a1410" stroke-width="0.9" />
<line x1="752.25" y1="235.5" x2="752.25" y2="261" stroke="#1a1410" stroke-width="1" />
<line x1="752.25" y1="261" x2="772.125" y2="235.5" stroke="#1a1410" stroke-width="0.9" />
<line x1="772.125" y1="235.5" x2="772.125" y2="261" stroke="#1a1410" stroke-width="1" />
<line x1="772.125" y1="261" x2="792.0" y2="235.5" stroke="#1a1410" stroke-width="0.9" />
<rect x="712.5" y="233" width="82.5" height="3" fill="#eebb8c" stroke="#1a1410" stroke-width="0.8" />
<rect x="792" y="233" width="3" height="28" fill="#eebb8c" stroke="#1a1410" stroke-width="0.8" />
<line x1="752.3" y1="283.7" x2="762.3" y2="283.7" stroke="#8a2414" stroke-width="1" />
<line x1="757.3" y1="278.7" x2="757.3" y2="288.7" stroke="#8a2414" stroke-width="1" />
<rect x="712.5" y="302.4" width="79.5" height="27.600000000000023" fill="none" stroke="#1a1410" stroke-width="1" />
<line x1="712.5" y1="302.4" x2="732.375" y2="330" stroke="#1a1410" stroke-width="0.9" />
<line x1="732.375" y1="302.4" x2="732.375" y2="330" stroke="#1a1410" stroke-width="1" />
<line x1="732.375" y1="302.4" x2="752.25" y2="330" stroke="#1a1410" stroke-width="0.9" />
<line x1="752.25" y1="302.4" x2="752.25" y2="330" stroke="#1a1410" stroke-width="1" />
<line x1="752.25" y1="302.4" x2="772.125" y2="330" stroke="#1a1410" stroke-width="0.9" />
<line x1="772.125" y1="302.4" x2="772.125" y2="330" stroke="#1a1410" stroke-width="1" />
<line x1="772.125" y1="302.4" x2="792.0" y2="330" stroke="#1a1410" stroke-width="0.9" />
<rect x="792" y="302.4" width="3" height="21" fill="#eebb8c" stroke="#1a1410" stroke-width="0.8" />
<path d="M763 85.5 L763 110 A24.5 24.5 0 0 0 792 85.5" fill="none" stroke="#a89a92" stroke-width="0.9" />
<path d="M820.6 323 A 34 34 0 0 1 854.5 289" fill="none" stroke="#a89a92" stroke-width="0.9" />
<rect x="841.6" y="295.5" width="9.1" height="6" fill="#d8ccc0" />
<rect x="837" y="308" width="14" height="7" fill="#d8ccc0" />
<line x1="837" y1="306" x2="862.7" y2="306" stroke="#1a1410" stroke-width="1" />
<rect x="858.8" y="133.6" width="32.90000000000009" height="101.4" fill="none" stroke="#1a1410" stroke-width="1" />
<rect x="870.3" y="144.2" width="21.40000000000009" height="80.5" fill="none" stroke="#1a1410" stroke-width="1" />
<line x1="858.8" y1="165.9" x2="891.7" y2="165.9" stroke="#1a1410" stroke-width="1" />
<line x1="858.8" y1="203.6" x2="891.7" y2="203.6" stroke="#1a1410" stroke-width="1" />
<rect x="901.5" y="150.8" width="21.100000000000023" height="34.0" fill="none" stroke="#1a1410" stroke-width="1" />
<rect x="904.5" y="154.8" width="15.100000000000023" height="26.0" fill="none" stroke="#1a1410" stroke-width="1.6" />
<rect x="940" y="133.3" width="33.8" height="37.1" fill="none" stroke="#1a1410" stroke-width="1" />
<line x1="961.7" y1="133.3" x2="961.7" y2="163.7" stroke="#1a1410" stroke-width="1" />
<line x1="940" y1="163.7" x2="973.8" y2="163.7" stroke="#1a1410" stroke-width="1" />
<rect x="940" y="217" width="33.8" height="37.7" fill="none" stroke="#1a1410" stroke-width="1" />
<line x1="961.7" y1="224" x2="961.7" y2="254.7" stroke="#1a1410" stroke-width="1" />
<line x1="940" y1="224" x2="973.8" y2="224" stroke="#1a1410" stroke-width="1" />
<rect x="1099.4" y="133.6" width="17.59999999999991" height="101.4" fill="none" stroke="#1a1410" stroke-width="1" />
<line x1="1099.4" y1="158.95" x2="1117" y2="133.6" stroke="#1a1410" stroke-width="0.9" />
<line x1="1099.4" y1="158.95" x2="1117" y2="158.95" stroke="#1a1410" stroke-width="1" />
<line x1="1099.4" y1="184.29999999999998" x2="1117" y2="158.95" stroke="#1a1410" stroke-width="0.9" />
<line x1="1099.4" y1="184.3" x2="1117" y2="184.3" stroke="#1a1410" stroke-width="1" />
<line x1="1099.4" y1="209.65" x2="1117" y2="184.3" stroke="#1a1410" stroke-width="0.9" />
<line x1="1099.4" y1="209.65" x2="1117" y2="209.65" stroke="#1a1410" stroke-width="1" />
<line x1="1099.4" y1="235.0" x2="1117" y2="209.65" stroke="#1a1410" stroke-width="0.9" />
<line x1="1109.3" y1="153.8" x2="1109.3" y2="191.4" stroke="#1a1410" stroke-width="2.6" />
<rect x="1105.5" y="162" width="6" height="20" fill="none" stroke="#1a1410" stroke-width="0.9" />
<rect x="998.8" y="295.4" width="81.9" height="45.4" fill="none" stroke="#1a1410" stroke-width="1" />
<rect x="1009" y="275" width="20" height="19.8" fill="none" stroke="#1a1410" stroke-width="1" />
<line x1="1009" y1="277.5" x2="1029" y2="277.5" stroke="#1a1410" stroke-width="0.8" />
<rect x="1009" y="341.7" width="20" height="18.8" fill="none" stroke="#1a1410" stroke-width="1" />
<line x1="1009" y1="357.8" x2="1029" y2="357.8" stroke="#1a1410" stroke-width="0.8" />
<rect x="1050" y="275" width="20" height="19.8" fill="none" stroke="#1a1410" stroke-width="1" />
<line x1="1050" y1="277.5" x2="1070" y2="277.5" stroke="#1a1410" stroke-width="0.8" />
<rect x="1050" y="341.7" width="20" height="18.8" fill="none" stroke="#1a1410" stroke-width="1" />
<line x1="1050" y1="357.8" x2="1070" y2="357.8" stroke="#1a1410" stroke-width="0.8" />
<text x="916.6" y="292.3" font-size="10" font-weight="bold" fill="#24140e" text-anchor="start" >Wohnen/Küche</text>
<text x="916.6" y="303.3" font-size="8.6" fill="#3a1f16" text-anchor="start" >53,31 m</text>
<rect x="947.3734375" y="296.0" width="4" height="4" fill="#dcd4d0" />
<text x="916.6" y="313.1" font-size="8.6" fill="#3a1f16" text-anchor="start" >B: Parkett</text>
<text x="916.6" y="322.90000000000003" font-size="8.6" fill="#3a1f16" text-anchor="start" >RH: 2,54 m</text>
<line x1="957.3" y1="308" x2="967.3" y2="308" stroke="#a02a18" stroke-width="1" />
<line x1="962.3" y1="303" x2="962.3" y2="313" stroke="#a02a18" stroke-width="1" />
<path d="M897 85.5 L897 109 A23.5 23.5 0 0 0 924 85.5" fill="none" stroke="#a89a92" stroke-width="0.9" />
<path d="M1001.8 85.5 L1001.8 109 A23.5 23.5 0 0 1 972.3 85.5" fill="none" stroke="#a89a92" stroke-width="0.9" />
<path d="M1118 342.5 L1090.5 342.5 A 27.5 27.5 0 0 1 1118 315" fill="none" stroke="#a89a92" stroke-width="0.9" />
<line x1="22" y1="330.4" x2="82" y2="330.4" stroke="#c8a090" stroke-width="0.8" stroke-dasharray="3 2"/>
<line x1="22" y1="392.2" x2="82" y2="392.2" stroke="#c8a090" stroke-width="0.8" stroke-dasharray="3 2"/>
<line x1="0" y1="330.4" x2="10" y2="330.4" stroke="#c8a090" stroke-width="0.8" stroke-dasharray="3 2"/>
<line x1="41.5" y1="310" x2="41.5" y2="392" stroke="#c8a090" stroke-width="0.8" stroke-dasharray="2 2"/>
<line x1="23" y1="310" x2="81" y2="390" stroke="#c8a090" stroke-width="0.8" />
<rect x="21.7" y="325.3" width="6.5" height="66.5" fill="#e2d6c6" />
<rect x="26" y="347" width="29" height="5.8" fill="#c8c0b4" />
<rect x="43.4" y="344.1" width="3.6" height="3" fill="#c8c0b4" />
<line x1="0" y1="349.6" x2="26" y2="349.6" stroke="#1a1010" stroke-width="1" />
<rect x="0" y="337.9" width="7" height="6.6" fill="#c8c0b4" />
<rect x="0" y="351.3" width="7" height="6.2" fill="#c8c0b4" />
<rect x="10.4" y="327.5" width="10.2" height="3" fill="#ffffff" stroke="#1a1410" stroke-width="0.8" />
<rect x="10.4" y="367.6" width="10.2" height="3" fill="#ffffff" stroke="#1a1410" stroke-width="0.8" />
<line x1="24.1" y1="392.2" x2="35.1" y2="392.2" stroke="#1a1410" stroke-width="1" />
<line x1="29.6" y1="386.7" x2="29.6" y2="397.7" stroke="#1a1410" stroke-width="1" />
<line x1="0" y1="397.6" x2="82" y2="397.6" stroke="#a02a18" stroke-width="1" />
<rect x="6.5" y="372.3" width="3.6" height="4" fill="#f4f4f4" stroke="#1a1410" stroke-width="0.6" />
<line x1="18.5" y1="330" x2="18.5" y2="368" stroke="#a02a18" stroke-width="0.8" />
<rect x="-2" y="398" width="9" height="69.4" fill="none" stroke="#1a1410" stroke-width="1" />
<text x="-2" y="426" font-size="8.6" fill="#3a1f16" text-anchor="start" >tt</text>
<text x="-4" y="436" font-size="8.6" fill="#3a1f16" text-anchor="start" >4 m</text>
<rect x="0" y="474.6" width="10.5" height="8.7" fill="#198a19" stroke="#1a1410" stroke-width="1" />
<rect x="-2" y="487.6" width="9" height="52" fill="none" stroke="#1a1410" stroke-width="1" />
<rect x="10.4" y="535.5" width="10.2" height="3" fill="#ffffff" stroke="#1a1410" stroke-width="0.8" />
<rect x="10.4" y="575" width="10.2" height="3" fill="#ffffff" stroke="#1a1410" stroke-width="0.8" />
<rect x="21.7" y="516" width="6.5" height="64.5" fill="#e2d6c6" />
<line x1="24.1" y1="515" x2="35.1" y2="515" stroke="#1a1410" stroke-width="1" />
<line x1="29.6" y1="509.5" x2="29.6" y2="520.5" stroke="#1a1410" stroke-width="1" />
<rect x="26" y="555.9" width="29" height="5.8" fill="#c8c0b4" />
<rect x="43.4" y="553" width="3.6" height="3" fill="#c8c0b4" />
<line x1="0" y1="557.9" x2="26" y2="557.9" stroke="#1a1010" stroke-width="1" />
<rect x="0" y="547.2" width="7" height="7.3" fill="#c8c0b4" />
<rect x="0" y="561" width="7" height="6.2" fill="#c8c0b4" />
<rect x="6.5" y="526" width="3.6" height="4" fill="#f4f4f4" stroke="#1a1410" stroke-width="0.6" />
<line x1="18.5" y1="538" x2="18.5" y2="575" stroke="#a02a18" stroke-width="0.8" />
<line x1="22" y1="516" x2="82" y2="516" stroke="#c8a090" stroke-width="0.8" stroke-dasharray="3 2"/>
<line x1="22" y1="576.1" x2="82" y2="576.1" stroke="#c8a090" stroke-width="0.8" stroke-dasharray="3 2"/>
<line x1="0" y1="597.2" x2="82" y2="597.2" stroke="#c8a090" stroke-width="0.8" stroke-dasharray="3 2"/>
<line x1="41.5" y1="516" x2="41.5" y2="597" stroke="#c8a090" stroke-width="0.8" stroke-dasharray="2 2"/>
<line x1="22" y1="597" x2="81" y2="520" stroke="#c8a090" stroke-width="0.8" />
<line x1="0" y1="609.4" x2="10.5" y2="609.4" stroke="#1a1410" stroke-width="1" />
<line x1="0" y1="615.7" x2="10.5" y2="615.7" stroke="#1a1410" stroke-width="1" />
<rect x="0" y="623.8" width="10.5" height="4.4" fill="#eebb8c" stroke="#1a1410" stroke-width="0.7" />
<line x1="0" y1="600" x2="8" y2="608" stroke="#1a1410" stroke-width="0.8" />
<rect x="1020" y="379.3" width="97" height="3" fill="#efe6da" stroke="#1a1410" stroke-width="1" />
<rect x="1022.6" y="382.2" width="57.999999999999886" height="24.5" fill="none" stroke="#1a1410" stroke-width="1" />
<line x1="1022.6" y1="406.7" x2="1041.9333333333334" y2="382.2" stroke="#1a1410" stroke-width="0.9" />
<line x1="1041.9333333333334" y1="382.2" x2="1041.9333333333334" y2="406.7" stroke="#1a1410" stroke-width="1" />
<line x1="1041.9333333333334" y1="406.7" x2="1061.2666666666667" y2="382.2" stroke="#1a1410" stroke-width="0.9" />
<line x1="1061.2666666666667" y1="382.2" x2="1061.2666666666667" y2="406.7" stroke="#1a1410" stroke-width="1" />
<line x1="1061.2666666666667" y1="406.7" x2="1080.6" y2="382.2" stroke="#1a1410" stroke-width="0.9" />
<line x1="1020" y1="382.2" x2="1020" y2="406.7" stroke="#1a1410" stroke-width="1" />
<line x1="1020" y1="397.5" x2="1117" y2="397.5" stroke="#a02a18" stroke-width="0.9" />
<text x="1044" y="429.9" font-size="10" font-weight="bold" fill="#24140e" text-anchor="start" >Zimmer</text>
<text x="1044" y="440.9" font-size="8.6" fill="#3a1f16" text-anchor="start" >11,20 m</text>
<rect x="1074.1359375" y="433.59999999999997" width="4" height="4" fill="#dcd4d0" />
<text x="1044" y="450.7" font-size="8.6" fill="#3a1f16" text-anchor="start" >B: Parkett</text>
<text x="1044" y="460.5" font-size="8.6" fill="#3a1f16" text-anchor="start" >RH: 2,54 m</text>
<line x1="1054.3" y1="454.4" x2="1064.3" y2="454.4" stroke="#a02a18" stroke-width="1" />
<line x1="1059.3" y1="449.4" x2="1059.3" y2="459.4" stroke="#a02a18" stroke-width="1" />
<rect x="1020" y="464.5" width="23.4" height="82.5" fill="none" stroke="#1a1410" stroke-width="1" />
<line x1="1020" y1="539.7" x2="1043.4" y2="539.7" stroke="#1a1410" stroke-width="1" />
<line x1="1086.7" y1="481" x2="1117" y2="481" stroke="#1a1410" stroke-width="1" />
<line x1="1086.7" y1="481" x2="1086.7" y2="547" stroke="#1a1410" stroke-width="1" />
<rect x="1083" y="502" width="14.7" height="24" fill="none" stroke="#1a1410" stroke-width="1" />
<rect x="1074.6" y="506" width="5.4" height="17" fill="none" stroke="#1a1410" stroke-width="1" />
<line x1="1080" y1="514" x2="1083" y2="514" stroke="#1a1410" stroke-width="1" />
<line x1="1020" y1="547" x2="1117" y2="547" stroke="#1a1410" stroke-width="1" />
<path d="M1118 440 L1091 440 A 27 27 0 0 0 1118 467" fill="none" stroke="#a89a92" stroke-width="0.9" />
<path d="M1080 350 L1092 346" fill="none" stroke="none" stroke-width="0" />
<rect x="1020" y="550" width="97" height="8" fill="#198a19" stroke="#1a1410" stroke-width="1" />
<line x1="1020" y1="582.8" x2="1117" y2="582.8" stroke="#a02a18" stroke-width="0.9" />
<line x1="1068" y1="558" x2="1068" y2="582.8" stroke="#a02a18" stroke-width="0.9" />
<line x1="1021.7" y1="580.5" x2="1066" y2="559.7" stroke="#a02a18" stroke-width="0.9" />
<line x1="1069.4" y1="580.5" x2="1115.6" y2="559.7" stroke="#a02a18" stroke-width="0.9" />
<path d="M1067 649.3 L1039 649.3 A 28 28 0 0 0 1067 677.3" fill="none" stroke="#a89a92" stroke-width="0.9" />
<path d="M1033 719 L1033 745" fill="none" stroke="#a89a92" stroke-width="0.9" />
<line x1="1117.5" y1="636" x2="1117.5" y2="745" stroke="#8a3030" stroke-width="0.8" stroke-dasharray="4 2"/>
<line x1="1128.5" y1="636" x2="1128.5" y2="756" stroke="#6a2a2a" stroke-width="0.7" />
<line x1="1131.5" y1="636" x2="1131.5" y2="756" stroke="#6a2a2a" stroke-width="0.7" />
<line x1="1082" y1="756" x2="1134" y2="756" stroke="#6a2a2a" stroke-width="0.7" />
<rect x="1082" y="756.5" width="52" height="3.5" fill="#b02020" />
<path d="M1129 756 L1137 764 M1137 756 L1129 764" fill="none" stroke="#222" stroke-width="1.4" />
<rect x="1080" y="632" width="3" height="3" fill="#6a9a6a" />
<rect x="1132" y="632" width="3" height="3" fill="#6a9a6a" />
<rect x="1080" y="758" width="3" height="3" fill="#6a9a6a" />
<rect x="365" y="717" width="4" height="28" fill="#e8c4b4" stroke="#1a1410" stroke-width="0.8" />
<line x1="366.2" y1="717" x2="366.2" y2="745" stroke="#1a1410" stroke-width="2" />
<text x="386" y="722.6" font-size="8.6" fill="#3a1f16" text-anchor="start" >RH: 2,54 m</text>
<rect x="444.4" y="726.3" width="13.8" height="6.1" fill="#d8ccc0" />
<line x1="432" y1="724.7" x2="458" y2="724.7" stroke="#1a1410" stroke-width="1" />
<rect x="437" y="739.6" width="4" height="4" fill="#f0f0f0" stroke="#1a1410" stroke-width="0.6" />
<path d="M470 717 A 30 30 0 0 1 444 740" fill="none" stroke="#a89a92" stroke-width="0.9" />
<path d="M495 745 L495 721.7 A23.299999999999955 23.299999999999955 0 0 1 523.7 745" fill="none" stroke="#a89a92" stroke-width="0.9" />
<path d="M599 745 L599 721.7 A23.299999999999955 23.299999999999955 0 0 0 571 745" fill="none" stroke="#a89a92" stroke-width="0.9" />
<line x1="735.5" y1="717" x2="735.5" y2="745" stroke="#1a1410" stroke-width="1" />
<rect x="736" y="714" width="20" height="6" fill="none" stroke="#1a1410" stroke-width="1" />
<rect x="668" y="714" width="21.6" height="7" fill="none" stroke="#1a1410" stroke-width="1" />
<line x1="689.6" y1="717" x2="689.6" y2="745" stroke="#1a1410" stroke-width="1" />
<rect x="919.7" y="725.7" width="14.5" height="7.3" fill="#d8ccc0" />
<line x1="906.5" y1="724" x2="932.6" y2="724" stroke="#1a1410" stroke-width="1" />
<rect x="911.6" y="739.6" width="4" height="4" fill="#f0f0f0" stroke="#1a1410" stroke-width="0.6" />
<path d="M945 717 A 30 30 0 0 1 925 738" fill="none" stroke="#a89a92" stroke-width="0.9" />
<path d="M883.5 745 L883.5 718 A27.0 27.0 0 0 0 855.8 745" fill="none" stroke="#a89a92" stroke-width="0.9" />
<path d="M1031.5 745 L1031.5 718 A27.0 27.0 0 0 0 1000 745" fill="none" stroke="#a89a92" stroke-width="0.9" />
<line x1="198.2" y1="717" x2="198.2" y2="745" stroke="#a02a18" stroke-width="0.9" /></svg>
<div id="dlg"><svg width="938" height="394" viewBox="82 323 938 394" style="position:absolute;left:0;top:0" font-family="Liberation Sans, sans-serif"><defs>
<linearGradient id="gtb" x1="0" y1="0" x2="0" y2="1"><stop offset="0" stop-color="#f3ebeb"/><stop offset="1" stop-color="#d6d3d3"/></linearGradient>
<linearGradient id="gok" x1="0" y1="0" x2="0" y2="1"><stop offset="0" stop-color="#64aef9"/><stop offset="1" stop-color="#1a74e6"/></linearGradient>
<linearGradient id="gst" x1="0" y1="0" x2="0" y2="1"><stop offset="0" stop-color="#5fa9f7"/><stop offset="1" stop-color="#1f77e4"/></linearGradient>
<linearGradient id="garr" x1="0" y1="0" x2="1" y2="0"><stop offset="0" stop-color="#2290f2"/><stop offset="0.6" stop-color="#2f86e0"/><stop offset="1" stop-color="#4a82b8"/></linearGradient>
</defs>
<rect x="82" y="323" width="938" height="395" rx="0" fill="#ececec" />
<rect x="82" y="323" width="938" height="21.5" rx="0" fill="url(#gtb)" />
<rect x="82" y="344" width="938" height="1" rx="0" fill="#b8b6b6" />
<circle cx="95.8" cy="333.7" r="5.6" fill="#d4d2d2" stroke="#c2c0c0" stroke-width="0.8"/>
<circle cx="115.9" cy="333.7" r="5.6" fill="#d4d2d2" stroke="#c2c0c0" stroke-width="0.8"/>
<circle cx="136" cy="333.7" r="5.6" fill="#3fc23c" stroke="#5fd05a" stroke-width="0.8"/>
<text x="437.2" y="339.3" font-size="13.8" fill="#4b4b4b" text-anchor="start" >Einstellungen für die Morph-Auswahl</text>
<rect x="92.5" y="353.5" width="29" height="23" rx="4" fill="#ffffff" stroke="#c6c4c4" stroke-width="0.8" />
<path d="M107 358.8 L108.6 363.6 L113.6 363.7 L109.6 366.7 L111.1 371.6 L107 368.6 L102.9 371.6 L104.4 366.7 L100.4 363.7 L105.4 363.6 Z" fill="none" stroke="#2b2b2b" stroke-width="1.1" />
<text x="1010.2" y="368.4" font-size="11.8" fill="#1e1e1e" text-anchor="end" >Gewählt: 1 Bearbeitbar: 1</text>
<rect x="94.5" y="389" width="913.5" height="21.5" rx="4" fill="#d6d6d6" />
<path d="M100.1 396 L108.9 396 L104.5 402.9 Z" fill="#8a8a8a" />
<path d="M116.5 392 L124.5 392 L126.8 393.7 L126.8 402.5 L118 402.5 L116.5 401 Z" fill="#e4e4e4" stroke="#1a1a1a" stroke-width="1" />
<path d="M118 393.7 L126.8 393.7 M118 393.7 L118 402.5 M116.5 392 L118 393.7" fill="none" stroke="#1a1a1a" stroke-width="1" />
<path d="M115.3 404.4 L125.7 404.4 L128.7 407.6 L118.3 407.6 Z" fill="#ececec" stroke="#1a1a1a" stroke-width="1" />
<path d="M131.5 393.8 L131.5 402.8 M129.6 395.6 L131.5 393.3 L133.4 395.6 M129.6 401 L131.5 403.3 L133.4 401" fill="none" stroke="#1d2a3a" stroke-width="1.3" />
<text x="140.4" y="403.6" font-size="11.6" font-weight="bold" fill="#282828" text-anchor="start" >Geometrie und Positionierung</text>
<path d="M98.7 454.5 L174.8 454.5 L189 473.8 L118 473.8 Z" fill="#d3d2d2" />
<path d="M124.7 457.8 L154.5 457.8 L163.2 469.9 L135.3 469.9 Z" fill="#9d9c9c" />
<path d="M125.1 444.3 C 129 436, 135 428, 142.2 427.6 C 145 427.5, 147 428.5, 147.9 429.5 C 141 436, 137 446, 136.4 455.5 Z" fill="#dcdcdc" />
<path d="M147.9 429.5 C 152 434, 156 450, 161.9 455.5 L136.4 455.5 C 137 446, 141 436, 147.9 429.5 Z" fill="#fafafa" />
<path d="M125.1 444.3 C 129 436, 135 428, 142.2 427.6 C 145 427.5, 147 428.5, 147.9 429.5 C 152 434, 156 450, 161.9 455.5 L136.4 455.5 Z M147.9 429.5 C 141 436, 137 446, 136.4 455.5" fill="none" stroke="#222" stroke-width="1.1" />
<path d="M162.3 455 L178 455 M163 469.5 L178 469.5" fill="none" stroke="#333" stroke-width="1" stroke-dasharray="1.5 1.5"/>
<path d="M178.2 456.5 L178.2 468 M176.2 458.5 L178.2 456 L180.2 458.5 M176.2 466 L178.2 468.5 L180.2 466" fill="none" stroke="#222" stroke-width="1.1" />
<rect x="197.2" y="446.6" width="329" height="27" rx="3.5" fill="#a9c4e6" />
<rect x="200.2" y="449.3" width="323.4" height="21.1" rx="0" fill="#ffffff" stroke="#8fb0d8" stroke-width="0.6" />
<rect x="203.7" y="453.5" width="23.1" height="13.1" rx="0" fill="#b5d3f3" />
<text x="204.6" y="463.4" font-size="11.2" fill="#111" text-anchor="start" >0,18</text>
<text x="100.6" y="489.3" font-size="11.75" fill="#1e1e1e" text-anchor="start" >Ursprungsgeschoss:</text>
<rect x="99.4" y="494.4" width="424.2" height="20.3" rx="3.5" fill="#ffffff" stroke="#c1bfbf" stroke-width="0.8" />
<path d="M507.3 494.4 L520 494.4 Q523.6 494.4 523.6 498 L523.6 511 Q523.6 514.7 520 514.7 L507.3 514.7 Z" fill="url(#gst)" />
<path d="M512.5 502 L515.5 499 L518.5 502 M512.5 507 L515.5 510 L518.5 507" fill="none" stroke="#ffffff" stroke-width="1.1" />
<text x="108.3" y="508" font-size="11.5" fill="#1e1e1e" text-anchor="start" >5. DG (Aktuell)</text>
<text x="504.3" y="532.4" font-size="11.8" fill="#1e1e1e" text-anchor="end" >zu Projektursprung</text>
<rect x="509.5" y="523" width="13.5" height="13" rx="3" fill="#ffffff" stroke="#c4c2c2" stroke-width="0.8" />
<path d="M514.8 527.2 L517.6 529.7 L514.8 532.2" fill="none" stroke="#222" stroke-width="1.3" />
<path d="M98.7 542.2 L174.8 542.2 L189 561.8 L118 561.8 Z" fill="#d3d2d2" />
<path d="M124.7 545.5 L154.5 545.5 L163.2 557.5 L135.3 557.5 Z" fill="#9d9c9c" />
<path d="M178.2 534 L178.2 557" fill="none" stroke="#222" stroke-width="1" stroke-dasharray="1.5 1.5"/>
<path d="M163 557.5 L178 557.5" fill="none" stroke="#333" stroke-width="1" stroke-dasharray="1.5 1.5"/>
<path d="M178.2 548 L178.2 557.5 M176 554.5 L178.2 557.8 L180.4 554.5" fill="none" stroke="#222" stroke-width="1.1" />
<rect x="200.4" y="540.5" width="323.2" height="20.9" rx="0" fill="#ffffff" stroke="#c1bfbf" stroke-width="0.8" />
<text x="205.2" y="554.8" font-size="11.3" fill="#111" text-anchor="start" >14,78</text>
<rect x="533.2" y="448.8" width="1" height="113.5" rx="0" fill="#d0cece" />
<rect x="543.2" y="448.6" width="462" height="24.7" rx="4" fill="#ffffff" stroke="#c1bfbf" stroke-width="0.8" />
<path d="M996.6 457.8 L999.6 460.8 L996.6 463.8" fill="none" stroke="#222" stroke-width="1.4" />
<defs><filter id="fbl" x="-5%" y="-20%" width="110%" height="140%"><feGaussianBlur stdDeviation="0.7"/></filter></defs>
<g filter="url(#fbl)">
<rect x="549.9" y="450.6" width="9.05" height="9.05" rx="0" fill="#bbb6b0" />
<rect x="549.9" y="459.6" width="9.05" height="9.1" rx="0" fill="#bbb6b0" />
<rect x="558.9" y="450.6" width="9.05" height="9.05" rx="0" fill="#d6c08a" />
<rect x="558.9" y="459.6" width="9.05" height="9.1" rx="0" fill="#d6c08a" />
<rect x="567.9" y="450.6" width="9.05" height="9.05" rx="0" fill="#d8d4d2" />
<rect x="567.9" y="459.6" width="9.05" height="9.1" rx="0" fill="#cfcdcc" />
<rect x="576.9" y="450.6" width="9.05" height="9.05" rx="0" fill="#d3d1d0" />
<rect x="576.9" y="459.6" width="9.05" height="9.1" rx="0" fill="#c6c4c3" />
<rect x="585.9" y="450.6" width="9.05" height="9.05" rx="0" fill="#ebe9e8" />
<rect x="585.9" y="459.6" width="9.05" height="9.1" rx="0" fill="#e2e1e0" />
<rect x="594.9" y="450.6" width="9.05" height="9.05" rx="0" fill="#e0dedd" />
<rect x="594.9" y="459.6" width="9.05" height="9.1" rx="0" fill="#e4e2e1" />
<rect x="603.9" y="450.6" width="9.05" height="9.05" rx="0" fill="#dcdad9" />
<rect x="603.9" y="459.6" width="9.05" height="9.1" rx="0" fill="#c8c6c5" />
<rect x="612.9" y="450.6" width="9.05" height="9.05" rx="0" fill="#dad8d7" />
<rect x="612.9" y="459.6" width="9.05" height="9.1" rx="0" fill="#c8c6c5" />
<rect x="621.9" y="450.6" width="9.05" height="9.05" rx="0" fill="#d4d2d1" />
<rect x="621.9" y="459.6" width="9.05" height="9.1" rx="0" fill="#bfbdbc" />
<rect x="630.9" y="450.6" width="9.05" height="9.05" rx="0" fill="#e6e5e4" />
<rect x="630.9" y="459.6" width="9.05" height="9.1" rx="0" fill="#e0dfde" />
<rect x="639.9" y="450.6" width="9.05" height="9.05" rx="0" fill="#eef3f8" />
<rect x="639.9" y="459.6" width="9.05" height="9.1" rx="0" fill="#c7daef" />
<rect x="648.9" y="450.6" width="9.05" height="9.05" rx="0" fill="#a8cbee" />
<rect x="648.9" y="459.6" width="9.05" height="9.1" rx="0" fill="#3a88e0" />
<rect x="657.9" y="450.6" width="9.05" height="9.05" rx="0" fill="#7fb3ea" />
<rect x="657.9" y="459.6" width="9.05" height="9.1" rx="0" fill="#2b82e6" />
<rect x="666.9" y="450.6" width="9.05" height="9.05" rx="0" fill="#c7ddf3" />
<rect x="666.9" y="459.6" width="9.05" height="9.1" rx="0" fill="#4a90e0" />
<rect x="675.9" y="450.6" width="9.05" height="9.05" rx="0" fill="#d7e6f5" />
<rect x="675.9" y="459.6" width="9.05" height="9.1" rx="0" fill="#5d9ce0" />
<rect x="684.9" y="450.6" width="9.05" height="9.05" rx="0" fill="#d9e8f6" />
<rect x="684.9" y="459.6" width="9.05" height="9.1" rx="0" fill="#74a8e0" />
<rect x="693.9" y="450.6" width="9.05" height="9.05" rx="0" fill="#dbe9f6" />
<rect x="693.9" y="459.6" width="9.05" height="9.1" rx="0" fill="#86b2e0" />
<rect x="702.9" y="450.6" width="9.05" height="9.05" rx="0" fill="#dde9f5" />
<rect x="702.9" y="459.6" width="9.05" height="9.1" rx="0" fill="#93bae2" />
<rect x="711.9" y="450.6" width="9.05" height="9.05" rx="0" fill="#e0ebf5" />
<rect x="711.9" y="459.6" width="9.05" height="9.1" rx="0" fill="#a9c6e4" />
</g>
<path d="M655 468.7 L666 468.7 L665 474 Z" fill="#3a7fd0" />
<path d="M545.2 554.3 C 545 548, 549 543.5, 555.5 542.3 C 553 546, 551.5 551, 551.6 557 Z" fill="#ececf0" stroke="#8a8a8a" stroke-width="0.8" />
<path d="M555.5 542.3 L558.4 551.5 L551.6 557 C 551.5 551, 553 546, 555.5 542.3 Z" fill="#fafafa" />
<path d="M555.5 542.3 L558.4 551.5 L551.6 557 M555.5 542.3 C 553 546, 551.5 551, 551.6 557 M545.2 554.3 L551.6 557" fill="none" stroke="#2a2a2a" stroke-width="1.1" />
<path d="M560.8 550.5 L566.7 561 L555.2 561 Z" fill="#f3d040" stroke="#2a2410" stroke-width="1.1" stroke-linejoin="round"/>
<path d="M560.8 553.6 L560.8 557.6 M560.8 558.8 L560.8 560" fill="none" stroke="#1a1a1a" stroke-width="1.4" />
<text x="573.4" y="554.4" font-size="9.9" fill="#1e1e1e" text-anchor="start" >Einige Elemente sind nicht solid</text>
<rect x="94.3" y="580" width="913.6" height="15.8" rx="4" fill="#d6d6d6" />
<path d="M100.8 584.3 L107.8 587.9 L100.8 591.5 Z" fill="#8a8a8a" />
<text x="140.6" y="592" font-size="11.6" font-weight="bold" fill="#282828" text-anchor="start" >Grundriss und Schnitt</text>
<rect x="94.3" y="603" width="913.6" height="15.8" rx="4" fill="#d6d6d6" />
<path d="M100.8 607.3 L107.8 610.9 L100.8 614.5 Z" fill="#8a8a8a" />
<text x="140.6" y="615" font-size="11.6" font-weight="bold" fill="#282828" text-anchor="start" >Modell</text>
<rect x="94.3" y="626" width="913.6" height="15.8" rx="4" fill="#d6d6d6" />
<path d="M100.8 630.3 L107.8 633.9 L100.8 637.5 Z" fill="#8a8a8a" />
<text x="140.6" y="638" font-size="11.6" font-weight="bold" fill="#282828" text-anchor="start" >Kategorien und Eigenschaften</text>
<path d="M117.2 594.3 C 117.5 588, 120 583, 123.7 580.4 M123.7 580.4 L123.7 596 M126.4 581 C 126 586, 127.5 591, 130.8 594.3 M116.8 594.3 L131 594.3" fill="none" stroke="#1e1e1e" stroke-width="1" />
<path d="M124 584 L125.5 590 L124.5 593" fill="none" stroke="#555" stroke-width="0.7" stroke-dasharray="1 1"/>
<defs><linearGradient id="gmod" x1="0" y1="0" x2="1" y2="0"><stop offset="0" stop-color="#d8d8d8"/><stop offset="1" stop-color="#7a7a7a"/></linearGradient></defs>
<path d="M117.5 613 C 117 608, 121 604.5, 127.3 604.2 C 125 608, 124 613, 123.9 618.1 C 121 617, 118.5 615.5, 117.5 613 Z" fill="url(#gmod)" />
<path d="M127.3 604.2 C 128 607, 129 610, 130.6 612.2 L 123.9 618.1 C 124 613, 125 608, 127.3 604.2 Z" fill="#ffffff" />
<path d="M117.5 613 C 117 608, 121 604.5, 127.3 604.2 C 128 607, 129 610, 130.6 612.2 L 123.9 618.1 C 121 617, 118.5 615.5, 117.5 613 Z" fill="none" stroke="#1e1e1e" stroke-width="1" />
<rect x="118.2" y="626.5" width="11.5" height="13.9" rx="1.2" fill="#f2f2f2" stroke="#1e1e1e" stroke-width="1.1" />
<path d="M120.6 629.6 L124.6 629.6 M120.6 631.6 L127.4 631.6 M120.6 633.5 L125.2 633.5 M120.6 635.4 L127.4 635.4 M120.6 637.3 L127.4 637.3" fill="none" stroke="#1e1e1e" stroke-width="0.9" />
<rect x="90.4" y="644" width="919" height="1" rx="0" fill="#d2d0d0" />
<path d="M92.5 706.4 L110.8 706.4 L116.8 699.3" fill="none" stroke="#1e1e1e" stroke-width="1.2" />
<path d="M92.5 703.4 L110.8 703.4 L116.8 696.3" fill="none" stroke="#1e1e1e" stroke-width="1.2" />
<path d="M98.8 693.2 L116.8 693.2 L110.8 700.3 L92.5 700.3 Z" fill="#f4f4f4" stroke="#1e1e1e" stroke-width="1.2" />
<path d="M98.6 695.4 L104.4 695.4 L102.4 698.4 L96.6 698.4 Z M107.3 698.4 L109.3 695.4 M110 698.4 L112 695.4" fill="none" stroke="#1e1e1e" stroke-width="1.1" />
<rect x="126.9" y="690.7" width="676" height="19" rx="4" fill="#ffffff" stroke="#c1bfbf" stroke-width="0.8" />
<path d="M130.1 700.3 Q 138 692 145.9 700.3 Q 138 708.6 130.1 700.3 Z" fill="none" stroke="#2a2a2a" stroke-width="1" />
<circle cx="138" cy="700.3" r="2.1" fill="none" stroke="#2a2a2a" stroke-width="1.1"/>
<rect x="152" y="691.8" width="141" height="14.5" rx="0" fill="#efefef" />
<g filter="url(#fbl)">
<rect x="222.4" y="691.8" width="8.8" height="7.2" rx="0" fill="#dcdcdc" />
<rect x="222.4" y="699" width="8.8" height="7.3" rx="0" fill="#d6d6d6" />
<rect x="231.20000000000002" y="691.8" width="8.8" height="7.2" rx="0" fill="#dadada" />
<rect x="231.20000000000002" y="699" width="8.8" height="7.3" rx="0" fill="#dedede" />
<rect x="240.0" y="691.8" width="8.8" height="7.2" rx="0" fill="#ececec" />
<rect x="240.0" y="699" width="8.8" height="7.3" rx="0" fill="#e8e8e8" />
<rect x="248.8" y="691.8" width="8.8" height="7.2" rx="0" fill="#e6e6e6" />
<rect x="248.8" y="699" width="8.8" height="7.3" rx="0" fill="#dedede" />
<rect x="257.6" y="691.8" width="8.8" height="7.2" rx="0" fill="#d2d2d2" />
<rect x="257.6" y="699" width="8.8" height="7.3" rx="0" fill="#c8c8c8" />
<rect x="266.4" y="691.8" width="8.8" height="7.2" rx="0" fill="#d6d6d6" />
<rect x="266.4" y="699" width="8.8" height="7.3" rx="0" fill="#d2d2d2" />
<rect x="275.2" y="691.8" width="8.8" height="7.2" rx="0" fill="#e4e4e4" />
<rect x="275.2" y="699" width="8.8" height="7.3" rx="0" fill="#dcdcdc" />
<rect x="284.0" y="691.8" width="8.8" height="7.2" rx="0" fill="#eaeaea" />
<rect x="284.0" y="699" width="8.8" height="7.3" rx="0" fill="#eeeeee" />
</g>
<text x="153.8" y="705" font-size="12.6" fill="#111" text-anchor="start" >80 BGF BRI</text>
<path d="M796 697 L799 700 L796 703" fill="none" stroke="#222" stroke-width="1.4" />
<path d="M298.5 699.4 L320.3 687.8 L318.8 694.3 C 340 695.5, 362 696.8, 383 697.4 Q 385.6 699.3 383 701.2 C 362 701.8, 340 703, 318.8 704.6 L320.3 709.8 Z" fill="url(#garr)" />
<rect x="828.8" y="690.9" width="88.3" height="19.2" rx="4" fill="#ffffff" stroke="#c1bfbf" stroke-width="0.8" />
<text x="873" y="704" font-size="11.8" fill="#1e1e1e" text-anchor="middle" >Abbrechen</text>
<rect x="934.5" y="690.4" width="69.2" height="20.2" rx="4" fill="url(#gok)" stroke="#3a83de" stroke-width="0.6" />
<text x="969" y="704.1" font-size="12.2" fill="#eef4ff" text-anchor="middle" >OK</text></svg></div>

</body></html>
